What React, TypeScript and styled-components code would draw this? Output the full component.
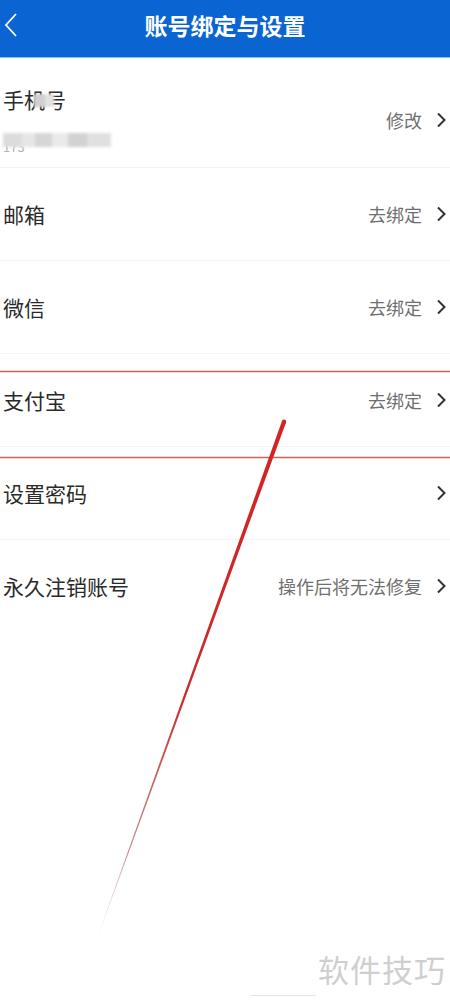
import styled, { createGlobalStyle } from "styled-components";

const GlobalStyle = createGlobalStyle`
  html, body {
    margin: 0;
    padding: 0;
    background: #ffffff;
    font-family: "Noto Sans CJK SC", "Noto Sans", sans-serif;
  }
`;

const rows = [
  { label: "邮箱", action: "去绑定" },
  { label: "微信", action: "去绑定" },
  { label: "支付宝", action: "去绑定" },
  { label: "设置密码", action: "" },
  { label: "永久注销账号", action: "操作后将无法修复" },
];

const Chevron = () => (
  <ChevronIcon width="12" height="16" viewBox="0 0 12 16">
    <path d="M3 1.5 L9.5 8 L3 14.5" fill="none" stroke="#333" strokeWidth="2" />
  </ChevronIcon>
);

const App = () => {
  return (
    <Page>
      <GlobalStyle />
      <Header>
        <BackButton width="16" height="28" viewBox="0 0 16 28">
          <path d="M13 2 L3 13 L13 24" fill="none" stroke="#fff" strokeWidth="1.8" />
        </BackButton>
        <Title>账号绑定与设置</Title>
      </Header>

      <List>
        <PhoneRow>
          <PhoneInfo>
            <Label>
              手机号
              <Mosaic />
            </Label>
            <PhoneNumber>
              173
              <MosaicBar />
            </PhoneNumber>
          </PhoneInfo>
          <PhoneAction>
            <ActionText>修改</ActionText>
            <Chevron />
          </PhoneAction>
        </PhoneRow>
        {rows.map((row, i) => (
          <Row key={row.label} $last={i === rows.length - 1}>
            <Label>{row.label}</Label>
            <Action>
              {row.action && <ActionText>{row.action}</ActionText>}
              <Chevron />
            </Action>
          </Row>
        ))}
      </List>

      <Annotation width="450" height="1001" viewBox="0 0 450 1001">
        <defs>
          <linearGradient id="stroke" x1="285" y1="420" x2="100" y2="930" gradientUnits="userSpaceOnUse">
            <stop offset="0" stopColor="#d42323" />
            <stop offset="0.55" stopColor="#c82c2c" />
            <stop offset="0.85" stopColor="#a86060" stopOpacity="0.7" />
            <stop offset="1" stopColor="#c8c0c0" stopOpacity="0.2" />
          </linearGradient>
        </defs>
        <line x1="0" y1="371.5" x2="450" y2="371.5" stroke="#d0604f" strokeWidth="1.5" />
        <line x1="0" y1="457.5" x2="450" y2="457.5" stroke="#d0604f" strokeWidth="1.5" />
        <polygon points="282,421 286,422.5 100.4,930 99.8,930" fill="url(#stroke)" />
        <circle cx="284" cy="421.8" r="2.2" fill="#d42323" />
      </Annotation>

      <Watermark>软件技巧</Watermark>
      <FooterLine />
    </Page>
  );
};
export default App;

const Page = styled.div`
  position: relative;
  width: 450px;
  height: 1001px;
  overflow: hidden;
  background: #ffffff;
`;

const Header = styled.div`
  height: 57px;
  background: #0a64d2;
  border-bottom: 1px solid #7fc0f0;
  display: flex;
  align-items: center;
  justify-content: center;
  position: relative;
`;

const BackButton = styled.svg`
  position: absolute;
  left: 3px;
  top: 12px;
`;

const Title = styled.h1`
  margin: -7px 0 0;
  color: #ffffff;
  font-size: 23px;
  font-weight: 700;
`;

const List = styled.div`
  display: flex;
  flex-direction: column;
`;

const Row = styled.div<{ $last?: boolean }>`
  height: 92px;
  display: flex;
  align-items: center;
  justify-content: space-between;
  padding: 0 3px 0 3px;
  border-bottom: 1px solid ${(p) => (p.$last ? "transparent" : "#f3f3f3")};
`;

const PhoneRow = styled(Row)`
  height: 109px;
`;

const PhoneInfo = styled.div`
  display: flex;
  flex-direction: column;
  gap: 20px;
  margin-top: 14px;
`;

const Label = styled.span`
  position: relative;
  font-size: 21px;
  color: #2a2a2a;
  line-height: 28px;
`;

const Mosaic = styled.span`
  position: absolute;
  left: 31px;
  top: 9px;
  width: 20px;
  height: 13px;
  background: linear-gradient(90deg, #d0d0d0 0 55%, #e2e2e2 55%);
  filter: blur(1.2px);
`;

const PhoneNumber = styled.span`
  position: relative;
  font-size: 13px;
  color: #b5b5b5;
  line-height: 16px;
  height: 16px;
  width: 108px;
  padding-top: 6px;
`;

const MosaicBar = styled.span`
  position: absolute;
  left: 0;
  top: 0;
  width: 108px;
  height: 14px;
  background: linear-gradient(
    90deg,
    #dcdcdc 0 18%,
    #e6e6e6 18% 30%,
    #d6d6d6 30% 45%,
    #eaeaea 45% 60%,
    #d2d2d2 60% 78%,
    #e0e0e0 78%
  );
  filter: blur(1.5px);
`;

const Action = styled.div`
  display: flex;
  align-items: center;
  gap: 13px;
`;

const PhoneAction = styled(Action)`
  margin-top: 14px;
`;

const ActionText = styled.span`
  font-size: 18px;
  color: #6f6f6f;
`;

const ChevronIcon = styled.svg`
  display: block;
`;

const Annotation = styled.svg`
  position: absolute;
  left: 0;
  top: 0;
  pointer-events: none;
`;

const Watermark = styled.div`
  position: absolute;
  right: 4px;
  top: 946px;
  font-size: 31px;
  color: #cfcfcf;
  letter-spacing: 1px;
`;

const FooterLine = styled.div`
  position: absolute;
  left: 250px;
  top: 995px;
  width: 66px;
  height: 1px;
  background: #e6e6e6;
`;
